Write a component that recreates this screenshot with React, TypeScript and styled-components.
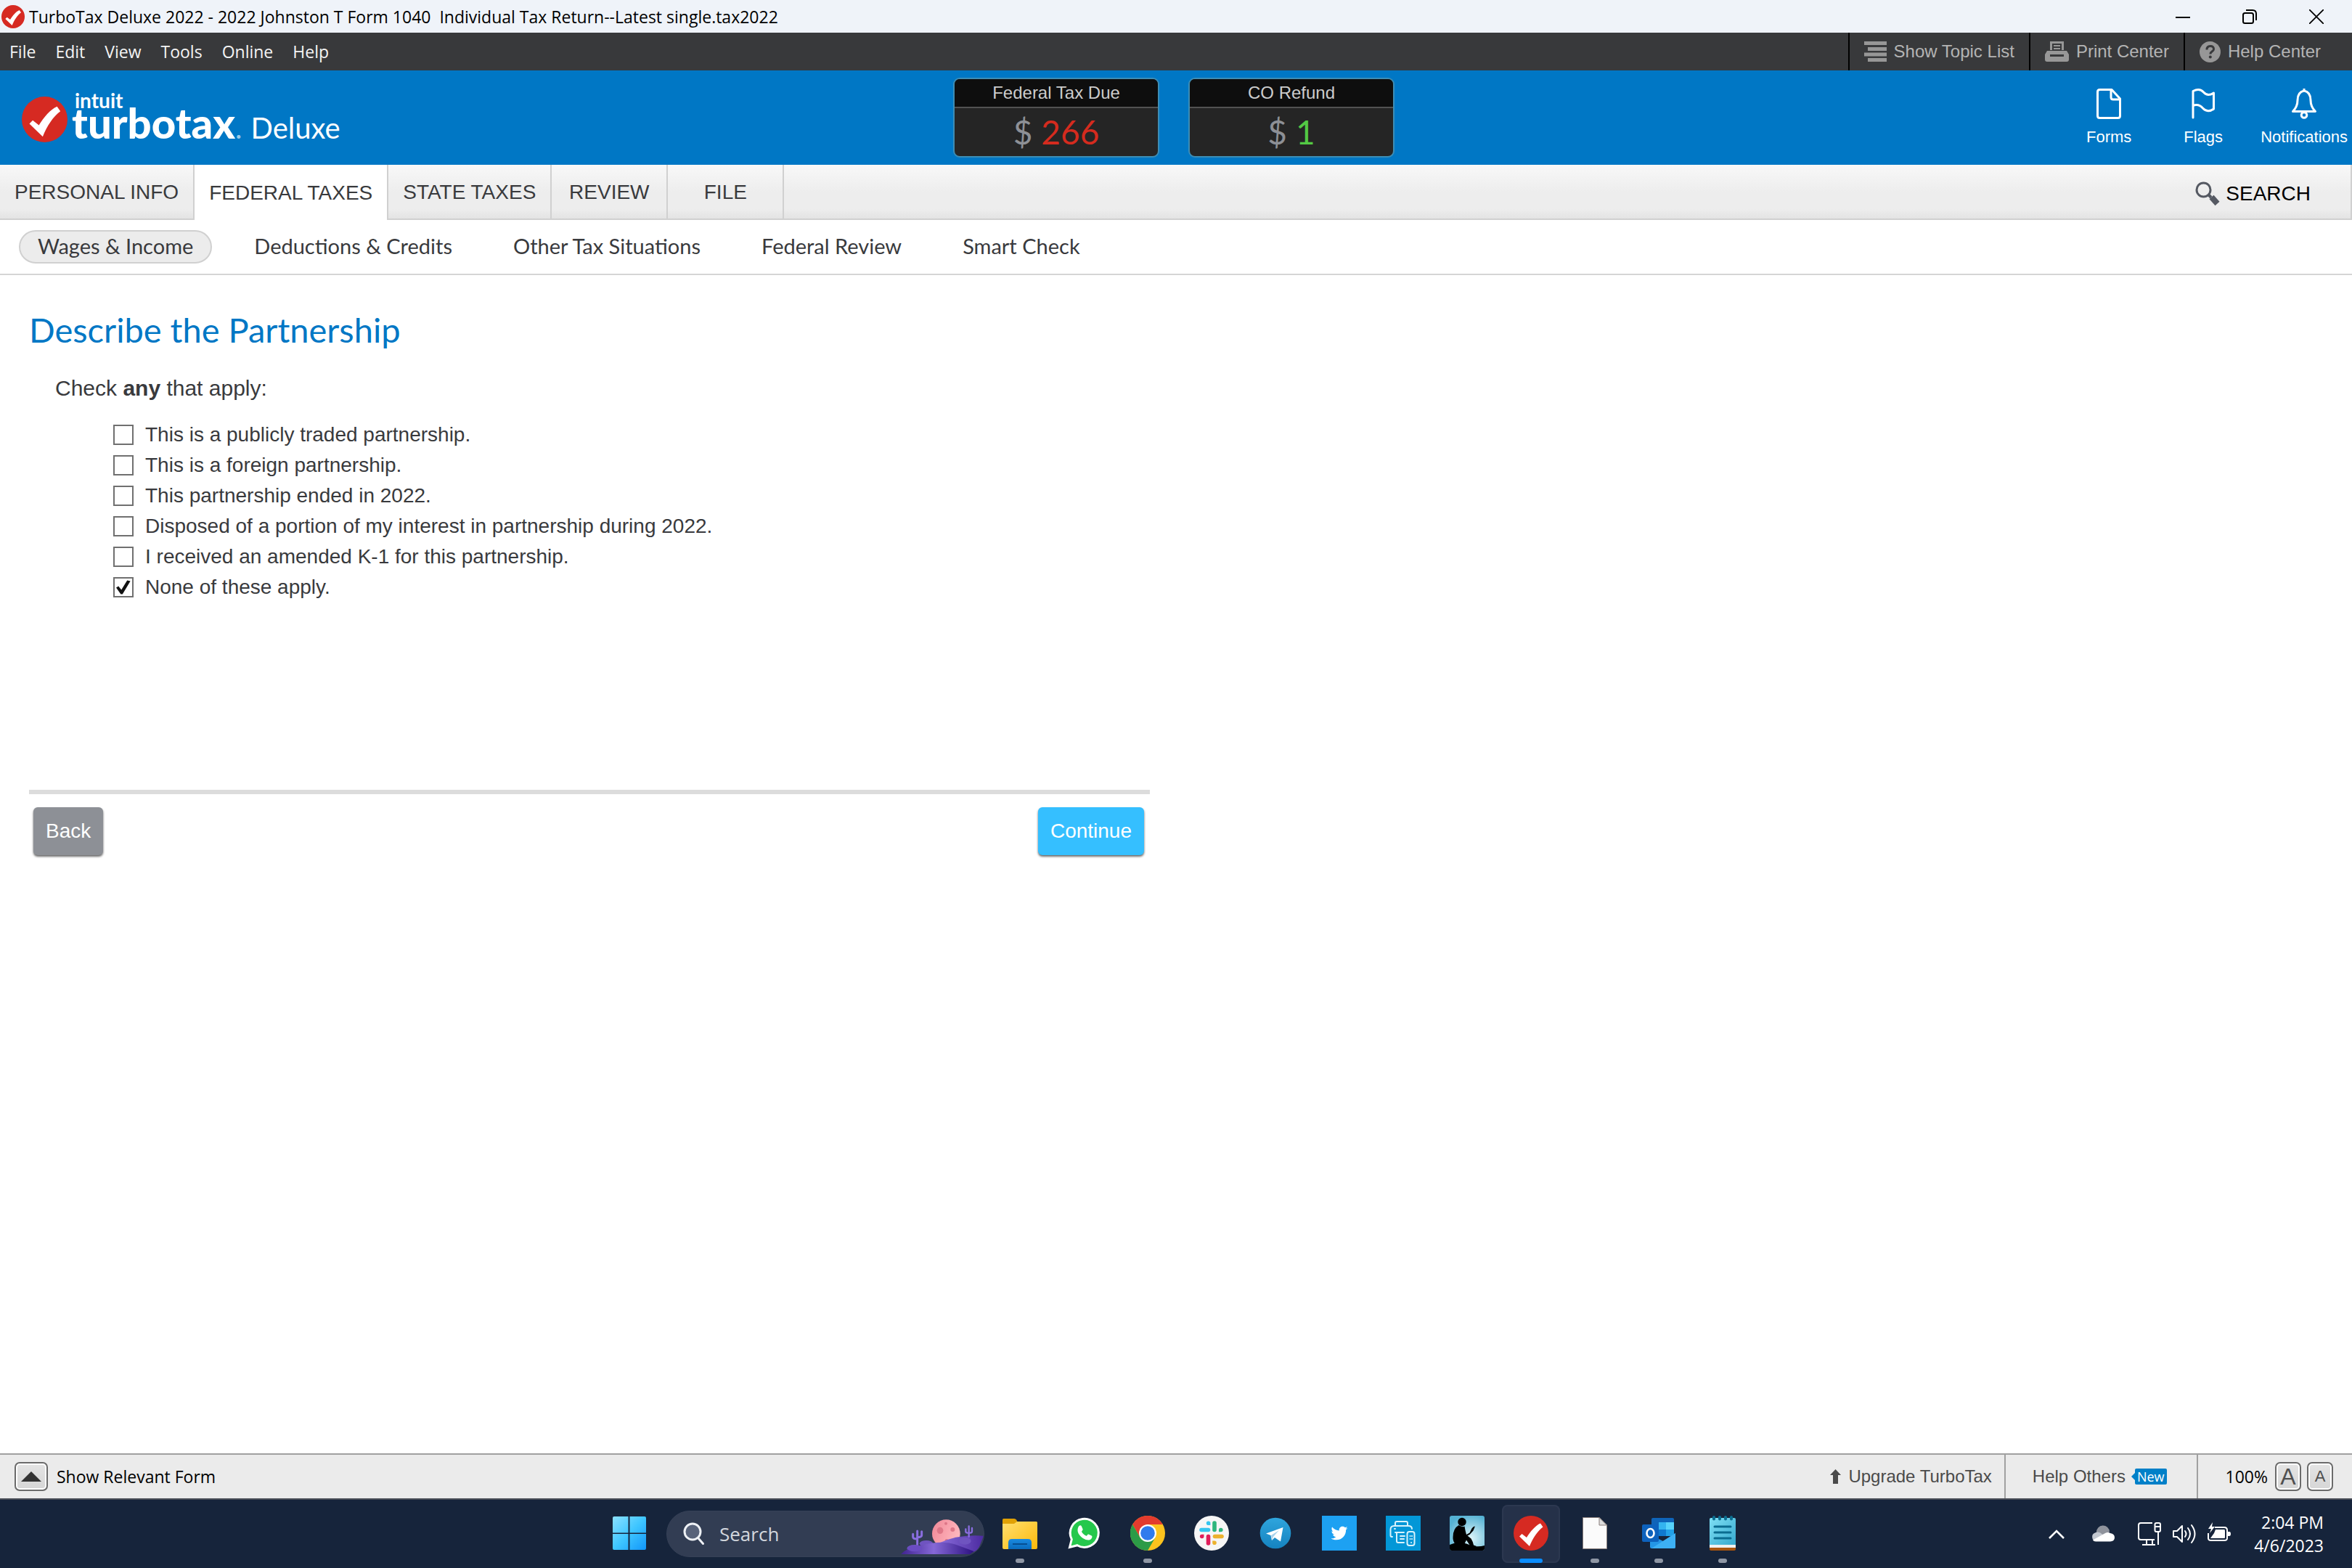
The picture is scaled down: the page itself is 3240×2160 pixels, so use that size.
import React, { useState } from "react";
import styled, { createGlobalStyle } from "styled-components";
import { FaTwitter } from "react-icons/fa";

const sans = '"Liberation Sans", Arial, sans-serif';
const system = '"Open Sans", "Segoe UI", sans-serif';
const brand = 'Lato, "Avenir Next", sans-serif';

const GlobalStyle = createGlobalStyle`
  *, *::before, *::after { box-sizing: border-box; }
  body { margin: 0; background: #fff; font-family: ${sans}; color: #393a3d; }
  button { font: inherit; color: inherit; background: none; border: 0; padding: 0; margin: 0; cursor: pointer; }
  svg { display: block; flex: none; }
`;

const Page = styled.div`
  display: flex;
  flex-direction: column;
  min-height: 100vh;
`;

/* ---------- window chrome ---------- */

const TitleBar = styled.header`
  display: flex;
  align-items: center;
  height: 45px;
  padding: 0 3px 0 2px;
  background: #eff3f9;
  color: #000;
  font: 23px/30px ${system};
`;

const WindowTitle = styled.span`
  flex: 1;
  margin-left: 6px;
  white-space: pre;
`;

const WindowButton = styled.button`
  display: flex;
  justify-content: center;
  align-items: center;
  width: 92px;
  height: 42px;
`;

const MenuBar = styled.nav`
  display: flex;
  align-items: stretch;
  height: 52px;
  background: #38393b;
  color: #f4f4f4;
`;

const MenuList = styled.div`
  display: flex;
  flex: 1;
  align-items: center;
  gap: 27px;
  padding-left: 13px;
  font: 23px/30px ${system};
`;

const ToolButton = styled.button<{ $last?: boolean }>`
  display: flex;
  align-items: center;
  gap: 10px;
  padding: 0 ${(p) => (p.$last ? 43 : 20)}px 0 20px;
  border-left: 2px solid #000;
  color: #b4b4b4;
  font: 24px/30px ${sans};
`;

/* ---------- product header ---------- */

const ProductHeader = styled.div`
  display: grid;
  grid-template-columns: 1fr auto 1fr;
  align-items: center;
  height: 130px;
  padding-right: 6px;
  background: #0077c5;
  color: #fff;
`;

const Logo = styled.div`
  display: flex;
  align-items: flex-end;
  gap: 6px;
  padding-left: 30px;
  font-family: ${brand};
`;

const Words = styled.div`
  padding-bottom: 6px;
`;

const Company = styled.div`
  padding-left: 4px;
  font-size: 28px;
  font-weight: 700;
  line-height: 20px;
`;

const ProductLine = styled.div`
  display: flex;
  align-items: baseline;
  height: 42px;
  line-height: 42px;
`;

const Product = styled.span`
  font-size: 58px;
  font-weight: 900;
`;

const Mark = styled.span`
  font-size: 40px;
  opacity: 0.6;
`;

const Edition = styled.span`
  margin-left: 12px;
  font-size: 40px;
`;

const Totals = styled.div`
  display: flex;
  gap: 40px;
`;

const TotalCard = styled.section`
  width: 284px;
  border: 2px solid #3d8db5;
  border-radius: 9px;
  background: #252525;
  overflow: hidden;
  text-align: center;
`;

const TotalLabel = styled.h2`
  margin: 0;
  background: #0e0e0e;
  border-bottom: 2px solid #525252;
  color: #ccc;
  font: 24px/38px ${sans};
`;

const TotalValue = styled.p<{ $color: string }>`
  display: flex;
  justify-content: center;
  gap: 12px;
  margin: 0;
  color: ${(p) => p.$color};
  font: 46px/66px ${brand};
`;

const Currency = styled.span`
  color: #8d9096;
`;

const HeaderActions = styled.div`
  display: flex;
  justify-content: flex-end;
`;

const HeaderAction = styled.button`
  display: flex;
  flex-direction: column;
  align-items: center;
  gap: 12px;
  min-width: 130px;
  font: 22px/26px ${sans};
  &:last-child {
    min-width: 0;
    margin-left: 14px;
  }
`;

/* ---------- navigation ---------- */

const TabBar = styled.nav`
  display: flex;
  height: 76px;
  background: linear-gradient(#f8f8f8, #ededed 50%, #ededed 80%, #e2e2e2);
  box-shadow: inset 0 -2px #d0d0d0;
`;

const Tab = styled.button<{ $active?: boolean }>`
  min-width: 160px;
  padding: ${(p) => (p.$active ? 2 : 0)}px 20px 0;
  border-right: 2px solid #d0d0d0;
  background: ${(p) => (p.$active ? "#fff" : "none")};
  font: 28px/32px ${sans};
`;

const SearchTab = styled.button`
  display: flex;
  align-items: center;
  gap: 8px;
  margin-left: auto;
  padding: 4px 55px 0 20px;
  border-right: 2px solid #d0d0d0;
  color: #000;
  font: 28px/32px ${sans};
`;

const SubNav = styled.nav`
  display: flex;
  align-items: center;
  gap: 32px;
  height: 76px;
  padding: 0 26px;
  border-bottom: 2px solid #d5d5d5;
`;

const SubLink = styled.a<{ $active?: boolean }>`
  padding: 0 24px 2px;
  border: 2px solid ${(p) => (p.$active ? "#d0d0d0" : "transparent")};
  border-radius: 23px;
  background: ${(p) => (p.$active ? "#ececec" : "none")};
  color: #393a3d;
  font: 29px/40px ${brand};
  text-decoration: none;
`;

/* ---------- interview ---------- */

const Interview = styled.main`
  flex: 1;
  padding: 46px 40px;
`;

const Question = styled.form`
  max-width: 1544px;
`;

const Heading = styled.h1`
  margin: 0 0 35px;
  color: #0077c5;
  font: 47px/58px ${brand};
`;

const Choices = styled.fieldset`
  margin: 0;
  padding: 0 0 258px 36px;
  border: 0;
`;

const Prompt = styled.legend`
  padding: 0;
  margin-bottom: 26px;
  font-size: 30px;
  line-height: 34px;
`;

const Choice = styled.label`
  display: flex;
  align-items: center;
  gap: 16px;
  width: fit-content;
  margin-left: 80px;
  font-size: 28px;
  line-height: 42px;
`;

const Check = styled.input`
  appearance: none;
  display: grid;
  place-items: center;
  width: 28px;
  height: 28px;
  margin: 0;
  border: 2px solid #707070;
  background: #fff;
  &:checked::before {
    content: "";
    width: 20px;
    height: 20px;
    background: #111;
    clip-path: polygon(0 52%, 16% 42%, 36% 68%, 76% 2%, 98% 8%, 44% 98%, 32% 98%);
  }
`;

const Actions = styled.div`
  display: flex;
  justify-content: space-between;
  padding: 18px 8px 0 6px;
  border-top: 6px solid #dcdcdc;
`;

const ActionButton = styled.button<{ $primary?: boolean }>`
  height: 66px;
  padding: 0 17px;
  border-radius: 6px;
  background: ${(p) => (p.$primary ? "#35bfff" : "#8d9096")};
  box-shadow: 0 2px 3px rgba(0, 0, 0, 0.6);
  color: #fff;
  font: 28px/32px ${sans};
`;

/* ---------- status bar ---------- */

const StatusBar = styled.footer`
  display: flex;
  height: 64px;
  border-top: 2px solid #a0a0a0;
  border-bottom: 2px solid #4a4e57;
  background: #ebebeb;
`;

const StatusLeft = styled.div`
  display: flex;
  flex: 1;
  align-items: center;
  gap: 12px;
  padding-left: 20px;
  color: #000;
  font: 23px/30px ${system};
`;

const StatusCell = styled.div<{ $left: number; $right: number; $divided?: boolean }>`
  display: flex;
  align-items: center;
  gap: 10px;
  padding: 0 ${(p) => p.$right}px 0 ${(p) => p.$left}px;
  border-left: ${(p) => (p.$divided ? "2px solid #a0a0a0" : "0")};
  color: #4a4a4a;
  font: 24px/30px ${sans};
`;

const StatusLink = styled.button`
  display: flex;
  align-items: center;
  gap: 10px;
`;

const ZoomLevel = styled.span`
  color: #000;
  font: 23px/30px ${system};
`;

const ZoomButtons = styled.div`
  display: flex;
  gap: 8px;
`;

const BoxButton = styled.button<{ $wide?: boolean; $size?: number }>`
  display: flex;
  justify-content: center;
  align-items: center;
  width: ${(p) => (p.$wide ? 46 : 36)}px;
  height: 40px;
  border: 2px solid #6b6b6b;
  border-radius: 7px;
  background: linear-gradient(#e4e4e4, #d6d6d6);
  box-shadow: inset 0 0 0 2px #fff;
  color: #4f4f4f;
  font: ${(p) => p.$size ?? 22}px/36px ${sans};
`;

const NewBadge = styled.span`
  display: flex;
  align-items: center;
  margin-left: -2px;
  color: #fff;
  font: 18px/22px ${system};
  &::before {
    content: "";
    border: 5px solid transparent;
    border-left: 0;
    border-right-color: #0080c8;
  }
`;

const BadgeText = styled.span`
  padding: 0 3px;
  border-radius: 2px;
  background: #0080c8;
`;

/* ---------- taskbar ---------- */

const Taskbar = styled.nav`
  display: grid;
  grid-template-columns: 1fr auto 1fr;
  align-items: center;
  height: 94px;
  background: #16243b;
  color: #fff;
`;

const Apps = styled.div`
  grid-column: 2;
  display: flex;
  align-items: center;
  gap: 8px;
`;

const AppButton = styled.button<{ $active?: boolean }>`
  display: grid;
  grid-template-rows: 1fr 6px;
  justify-items: center;
  align-items: center;
  row-gap: 4px;
  width: 80px;
  height: 80px;
  padding: 8px 0 0;
  border-radius: 8px;
  background: ${(p) => (p.$active ? "#253149" : "none")};
  box-shadow: ${(p) => (p.$active ? "inset 0 0 0 2px #2c3850" : "none")};
`;

const Running = styled.span<{ $active?: boolean }>`
  width: ${(p) => (p.$active ? 32 : 12)}px;
  height: 6px;
  border-radius: 3px;
  background: ${(p) => (p.$active ? "#0a8dff" : "#8f97a5")};
`;

const TaskSearch = styled.label`
  display: flex;
  align-items: center;
  width: 438px;
  height: 64px;
  margin: 0 1px 0 3px;
  padding-left: 22px;
  border: 1px solid #364157;
  border-radius: 32px;
  background: #323d53;
  overflow: hidden;
`;

const TaskInput = styled.input`
  flex: 1;
  min-width: 0;
  padding: 0 0 0 20px;
  border: 0;
  outline: 0;
  background: none;
  color: #fff;
  font: 26px/36px ${system};
  &::placeholder { color: #d3d7de; opacity: 1; }
`;

const Tray = styled.div`
  display: flex;
  justify-content: flex-end;
  align-items: center;
  gap: 32px;
  padding-right: 39px;
`;

const TrayButton = styled.button`
  display: flex;
  gap: 16px;
`;

const Clock = styled.time`
  text-align: right;
  font: 23px/32px ${system};
`;

/* ---------- drawings ---------- */

const CheckDisc = ({ size }: { size: number }) => (
  <svg width={size} height={size} viewBox="0 0 48 48" aria-hidden="true">
    <circle cx="24" cy="24" r="24" fill="#d62a22" />
    <path d="M8 28.500l3.500-3.500 6.500 5C23 22 30 13.500 37 10.500l3.500 5C33 21 26.500 31 22 42z" fill="#fff" />
  </svg>
);

const FolderIcon = () => (
  <svg width="48" height="48" viewBox="0 0 48 48">
    <defs>
      <linearGradient id="folder" x1="0" y1="0" x2="1" y2="1">
        <stop offset="0" stopColor="#ffdf70" /><stop offset="1" stopColor="#fcb90a" />
      </linearGradient>
      <linearGradient id="pocket" x1="0" y1="0" x2="0" y2="1">
        <stop offset="0" stopColor="#1a8ae0" /><stop offset="1" stopColor="#0a6cbe" />
      </linearGradient>
    </defs>
    <path d="M0 5.500Q0 4 1.500 4H16q2 0 3 1.500L21 9 16 14H0z" fill="#e0a106" />
    <path d="M0 11h16l4-3h26.500Q48 8 48 9.500V44q0 2-2 2H2q-2 0-2-2z" fill="url(#folder)" />
    <path d="M8 46V37q0-5 5-5h22q5 0 5 5v9z" fill="url(#pocket)" />
    <path d="M14 39h20" stroke="#064f91" strokeWidth="2" />
  </svg>
);

const WhatsAppIcon = () => (
  <svg width="48" height="48" viewBox="0 0 48 48">
    <path d="M4.500 43.500l2.800-11A19.500 19.500 0 1 1 15 40.700z" fill="#25c84c" stroke="#fff" strokeWidth="3" />
    <path
      d="M17.500 14c1-1.200 2.800-1 3.300.2l1.900 4.500c.2.800-1.900 2.700-1.700 3.300 1.200 2.500 3.500 4.600 6.500 5.700.8.200 2-2.500 2.900-2.200l4.300 2c1.500.8.500 3.600-.8 4.700-2.600 2.200-6.500 1.600-11.200-1.200-3.500-2.200-6.200-5.600-7-8.900-.6-3 .200-6.300 1.800-8.100z"
      fill="#fff"
    />
  </svg>
);

const ChromeIcon = () => (
  <svg width="48" height="48" viewBox="0 0 48 48">
    <circle cx="24" cy="24" r="24" fill="#fcc31e" />
    <path d="M24 12H44.800A24 24 0 0 0 3.200 12L13.600 30z" fill="#e33b2e" />
    <path d="M13.600 30L3.200 12A24 24 0 0 0 24 48L34.400 30z" fill="#2c9b47" />
    <circle cx="24" cy="24" r="12" fill="#fff" />
    <circle cx="24" cy="24" r="9.800" fill="#2f7bed" />
  </svg>
);

const SlackIcon = () => (
  <svg width="48" height="48" viewBox="0 0 48 48" strokeLinecap="round" strokeWidth="5.600">
    <circle cx="24" cy="24" r="24" fill="#f6f6f6" />
    <path d="M10 19.500h9.500" stroke="#36c5f0" /><path d="M16.800 10.200a2.800 2.800 0 1 1 5.600 0v2.800h-2.800a2.800 2.800 0 0 1-2.800-2.800z" fill="#36c5f0" />
    <path d="M28 10v9.500" stroke="#2eb67d" /><path d="M34 22.300v-2.800a2.800 2.800 0 1 1 2.800 2.800z" fill="#2eb67d" />
    <path d="M28.500 28.500h9.500" stroke="#ecb22e" /><path d="M25.200 34.500h2.800a2.800 2.800 0 1 1-2.800 2.800z" fill="#ecb22e" />
    <path d="M19.500 28.500V38" stroke="#e01e5a" /><path d="M13.500 25.700v2.800a2.800 2.800 0 1 1-2.800-2.800z" fill="#e01e5a" />
  </svg>
);

const TelegramIcon = () => (
  <svg width="48" height="48" viewBox="0 0 48 48">
    <defs>
      <linearGradient id="telegram" x1="0" y1="0" x2="0" y2="1">
        <stop offset="0" stopColor="#2fa5dd" /><stop offset="1" stopColor="#1583c0" />
      </linearGradient>
    </defs>
    <circle cx="24" cy="24" r="21.300" fill="url(#telegram)" />
    <path d="M11 24.500L34.500 16l-3.500 19.500-8-5.500-4 4-1.500-7z" fill="#fff" />
    <path d="M18 27l11-7-8 9-2 4.500z" fill="#a9d3ec" />
  </svg>
);

const TwitterIcon = () => (
  <svg width="48" height="48" viewBox="0 0 48 48">
    <path d="M0 0h48v48H0z" fill="#1da1f2" />
    <FaTwitter x="12.500" y="12.500" size={23} color="#fff" />
  </svg>
);

const PrinterAppIcon = () => (
  <svg width="48" height="48" viewBox="0 0 48 48" fill="none" stroke="#d9f2fb" strokeWidth="2" strokeLinecap="round">
    <path d="M0 0h48v48H0z" fill="#0397d7" stroke="none" />
    <path d="M13 13V10q0-2 2-2h13q2 0 2 2v3M9 29H8q-1.500 0-1.500-2V19q0-5 5-5H31q5 0 5 4M13 23h12M15 23v12q0 2 2 2h8M20 28h6M20 32h5M12 18h1" />
    <rect x="29.500" y="22" width="10" height="19" rx="3" />
    <path d="M33.500 28h.1M36 28h.1M33.500 32h.1M36 32h.1M35 37h.1" />
  </svg>
);

const ReaderIcon = () => (
  <svg width="48" height="48" viewBox="0 0 48 48">
    <defs>
      <radialGradient id="sky" cx="0.600" cy="0.650" r="0.700">
        <stop offset="0" stopColor="#dff6fa" /><stop offset="1" stopColor="#54b1d3" />
      </radialGradient>
    </defs>
    <rect width="48" height="48" rx="3" fill="url(#sky)" />
    <path d="M0 40q11-5 23-1.500 13 6 25 2.500v4q0 3-3 3H3q-3 0-3-3z" />
    <circle cx="17" cy="8.500" r="5.700" />
    <path d="M12.500 13q5 3 8 1.500l1 5.500 1.500 6 4.500-2.500 3-6q2-3 4.500-3l-2.500 6-5 5.500-3 1.500 5 4q2.500 4 3.500 9l4 1.500-5 1-4-2-5-7.500-3 6H8q-4-5-3.500-10 0-12 8-16.500z" />
  </svg>
);

const DocumentIcon = () => (
  <svg width="48" height="48" viewBox="0 0 48 48" stroke="#8a7f7c" strokeWidth="1">
    <path d="M7.500 2.500H30L40.500 13v32.500h-33z" fill="#fbfbfb" />
    <path d="M30 2.500V13h10.500z" fill="#ddd" />
  </svg>
);

const OutlookIcon = () => (
  <svg width="48" height="48" viewBox="0 0 48 48">
    <path d="M14 5q0-2 2-2h27q2 0 2 2v22H14z" fill="#0f64b8" />
    <path d="M24 9h10v10H24z" fill="#33b4f0" />
    <path d="M34 9h11v10H34z" fill="#57d3fb" />
    <path d="M24 19h10v9H24z" fill="#1079cf" />
    <path d="M34 19h11v9H34z" fill="#22a1e8" />
    <path d="M12 26l18 9 17-11v19q0 2-2 2H14q-2 0-2-2z" fill="#2496e6" />
    <path d="M47 24v19q0 2-2 2H14z" fill="#3db0f4" />
    <rect x="1" y="12" width="23" height="24" rx="2" fill="#0d62bd" />
    <ellipse cx="12.500" cy="24" rx="5" ry="6" fill="none" stroke="#fff" strokeWidth="2.600" />
  </svg>
);

const NotepadIcon = () => (
  <svg width="48" height="48" viewBox="0 0 48 48">
    <defs>
      <linearGradient id="notepad" x1="0" y1="0" x2="1" y2="1">
        <stop offset="0" stopColor="#7fe0f4" /><stop offset="1" stopColor="#36a9cf" />
      </linearGradient>
    </defs>
    <path d="M6 43h36v3q0 2-2 2H8q-2 0-2-2z" fill="#a8550f" />
    <path d="M6 39h36v5H6z" fill="#f1f1f1" />
    <path d="M6 5q0-2 2-2h32q2 0 2 2v35H6z" fill="url(#notepad)" />
    <path d="M12 2v2.500M20 2v2.500M28 2v2.500M36 2v2.500" stroke="#0b6d8f" strokeWidth="4" strokeLinecap="round" />
    <path d="M13 15h22M13 23h22M13 31h22" stroke="#0a6c90" strokeWidth="3" strokeLinecap="round" />
  </svg>
);

const StartIcon = () => (
  <svg width="48" height="48" viewBox="0 0 48 48">
    <defs>
      <linearGradient id="start" gradientUnits="userSpaceOnUse" x1="0" y1="0" x2="48" y2="48">
        <stop offset="0" stopColor="#8fe2ff" /><stop offset="0.500" stopColor="#3fc6ff" /><stop offset="1" stopColor="#0f94fa" />
      </linearGradient>
    </defs>
    <path d="M1 3q0-2 2-2h19.500v22.500H1zM24.500 1H45q2 0 2 2v20.500H24.500zM1 25h21.500v22H3q-2 0-2-2zM24.500 25H47v20q0 2-2 2H24.500z" fill="url(#start)" />
  </svg>
);

const SearchScene = () => (
  <svg width="115" height="62" viewBox="0 -9 345 186">
    <defs>
      <linearGradient id="moon" x1="0" y1="0" x2="1" y2="0.400">
        <stop offset="0" stopColor="#f08797" /><stop offset="1" stopColor="#ffb6bd" />
      </linearGradient>
      <linearGradient id="front" x1="0" y1="0" x2="1" y2="0">
        <stop offset="0" stopColor="#3f2390" /><stop offset="0.450" stopColor="#8568d6" /><stop offset="1" stopColor="#2c1180" />
      </linearGradient>
      <linearGradient id="back" x1="0" y1="0" x2="1" y2="0">
        <stop offset="0" stopColor="#8a6ddb" /><stop offset="1" stopColor="#4b2aa0" />
      </linearGradient>
    </defs>
    <circle cx="190" cy="83" r="58" fill="url(#moon)" />
    <g fill="#de7788">
      <ellipse cx="165" cy="70" rx="13" ry="14" /><circle cx="217" cy="66" r="9" /><circle cx="189" cy="41" r="6" /><circle cx="192" cy="112" r="7" />
    </g>
    <path d="M160 122Q240 84 345 92L322 150 300 160z" fill="url(#back)" />
    <g fill="none" stroke="#8a6ee0" strokeWidth="9" strokeLinecap="round">
      <path d="M71 72v58M53 85v12q0 8 18 8M89 74v16q0 8-18 8" />
      <path d="M284 52v44M271 64v10q0 6 13 6M297 60v14q0 6-13 6" strokeWidth="7" />
    </g>
    <g fill="#6f54c0">
      <ellipse cx="108" cy="124" rx="28" ry="13" /><ellipse cx="60" cy="144" rx="32" ry="15" /><ellipse cx="268" cy="113" rx="25" ry="15" />
    </g>
    <path d="M3 168Q30 140 80 132 170 108 230 128L305 156 288 168z" fill="url(#front)" />
    <ellipse cx="60" cy="144" rx="30" ry="13" fill="#6a4cc2" />
  </svg>
);

/* ---------- data ---------- */

const menus = ["File", "Edit", "View", "Tools", "Online", "Help"];
const tabs = ["PERSONAL INFO", "FEDERAL TAXES", "STATE TAXES", "REVIEW", "FILE"];
const sections = ["Wages & Income", "Deductions & Credits", "Other Tax Situations", "Federal Review", "Smart Check"];
const options = [
  "This is a publicly traded partnership.",
  "This is a foreign partnership.",
  "This partnership ended in 2022.",
  "Disposed of a portion of my interest in partnership during 2022.",
  "I received an amended K-1 for this partnership.",
  "None of these apply.",
];
const apps: { name: string; icon: React.ReactNode; running?: boolean; active?: boolean }[] = [
  { name: "File Explorer", icon: <FolderIcon />, running: true },
  { name: "WhatsApp", icon: <WhatsAppIcon /> },
  { name: "Chrome", icon: <ChromeIcon />, running: true },
  { name: "Slack", icon: <SlackIcon /> },
  { name: "Telegram", icon: <TelegramIcon /> },
  { name: "Twitter", icon: <TwitterIcon /> },
  { name: "Printer", icon: <PrinterAppIcon /> },
  { name: "Kindle", icon: <ReaderIcon /> },
  { name: "TurboTax", icon: <CheckDisc size={48} />, running: true, active: true },
  { name: "Document", icon: <DocumentIcon />, running: true },
  { name: "Outlook", icon: <OutlookIcon />, running: true },
  { name: "Notepad", icon: <NotepadIcon />, running: true },
];

export default function App() {
  const [checked, setChecked] = useState(options.map((_, i) => i === options.length - 1));
  const toggle = (index: number) => setChecked(checked.map((on, i) => (i === index ? !on : on)));

  return (
    <Page>
      <GlobalStyle />
      <TitleBar>
        <CheckDisc size={32} />
        <WindowTitle>{"TurboTax Deluxe 2022 - 2022 Johnston T Form 1040  Individual Tax Return--Latest single.tax2022"}</WindowTitle>
        <WindowButton aria-label="Minimize">
          <svg width="20" height="20" viewBox="0 0 20 20"><path d="M0 10h20v2H0z" /></svg>
        </WindowButton>
        <WindowButton aria-label="Restore">
          <svg width="20" height="20" viewBox="0 0 20 20" fill="none" stroke="#000" strokeWidth="2">
            <rect x="1" y="5" width="14" height="14" rx="2.500" />
            <path d="M5 1h9q5 0 5 5v9" />
          </svg>
        </WindowButton>
        <WindowButton aria-label="Close">
          <svg width="20" height="20" viewBox="0 0 20 20" stroke="#000" strokeWidth="1.800"><path d="M0 0l20 20M20 0L0 20" /></svg>
        </WindowButton>
      </TitleBar>

      <MenuBar>
        <MenuList>
          {menus.map((menu) => <button key={menu}>{menu}</button>)}
        </MenuList>
        <ToolButton>
          <svg width="31" height="28" viewBox="0 0 31 28" fill="#979797">
            <path d="M0 0h31v5H0zM5 8h26v5H5zM0 15.500h31v5H0zM5 23h26v5H5z" />
          </svg>
          Show Topic List
        </ToolButton>
        <ToolButton>
          <svg width="33" height="28" viewBox="0 0 33 28" fill="#979797">
            <path d="M7 12V0h19v12h-3V3H10v9z" />
            <path d="M12 5h9v2h-9zM12 9h9v2h-9z" />
            <path fillRule="evenodd" d="M3 13h27l3 5v7q0 3-3 3H3q-3 0-3-3v-7zM7 18v3h19v-3z" />
          </svg>
          Print Center
        </ToolButton>
        <ToolButton $last>
          <svg width="29" height="29" viewBox="0 0 29 29">
            <circle cx="14.500" cy="14.500" r="14.500" fill="#979797" />
            <path d="M10 11.500q0-5 4.800-5t4.700 4.200c0 3.300-4.600 3-4.600 6.800" fill="none" stroke="#38393b" strokeWidth="3" />
            <circle cx="14.800" cy="21.500" r="2" fill="#38393b" />
          </svg>
          Help Center
        </ToolButton>
      </MenuBar>

      <ProductHeader>
        <Logo>
          <CheckDisc size={63} />
          <Words>
            <Company>intuit</Company>
            <ProductLine>
              <Product>turbotax</Product>
              <Mark>.</Mark>
              <Edition>Deluxe</Edition>
            </ProductLine>
          </Words>
        </Logo>
        <Totals>
          <TotalCard>
            <TotalLabel>Federal Tax Due</TotalLabel>
            <TotalValue $color="#d52b1e"><Currency>$</Currency>266</TotalValue>
          </TotalCard>
          <TotalCard>
            <TotalLabel>CO Refund</TotalLabel>
            <TotalValue $color="#53c944"><Currency>$</Currency>1</TotalValue>
          </TotalCard>
        </Totals>
        <HeaderActions>
          <HeaderAction>
            <svg width="34" height="42" viewBox="0 0 34 42" fill="none" stroke="#fff" strokeWidth="3" strokeLinejoin="round">
              <path d="M4 1.500h17L32.500 14v23.500q0 3-3 3H4.500q-3 0-3-3v-33q0-3 3-3z" />
              <path d="M20 2v10q0 3 3 3h9" />
            </svg>
            Forms
          </HeaderAction>
          <HeaderAction>
            <svg width="34" height="42" viewBox="0 0 34 42" fill="none" stroke="#fff" strokeWidth="3" strokeLinecap="round" strokeLinejoin="round">
              <path d="M3 40V3.500C9 .5 14 1 17.500 5S26 9.500 31.500 6v22c-5 4-11 3.500-15-1S8 21.500 3 23.500" />
            </svg>
            Flags
          </HeaderAction>
          <HeaderAction>
            <svg width="36" height="42" viewBox="0 0 36 42" fill="none" stroke="#fff" strokeWidth="3" strokeLinejoin="round">
              <path d="M18 3c7 1.500 9 7 9 13 0 7 2 11 6.500 15.500H2.500C7 27 9 23 9 16 9 10 11 4.500 18 3z" />
              <path d="M18 0v3" />
              <circle cx="18" cy="36.500" r="3.800" />
            </svg>
            Notifications
          </HeaderAction>
        </HeaderActions>
      </ProductHeader>

      <TabBar>
        {tabs.map((tab, i) => <Tab key={tab} $active={i === 1}>{tab}</Tab>)}
        <SearchTab>
          <svg width="34" height="34" viewBox="0 0 34 34" fill="none" stroke="#555962">
            <circle cx="11.500" cy="11.500" r="9.500" strokeWidth="3" />
            <path d="M18 18l4 4" strokeWidth="4" />
            <path d="M22.500 21.500l8 9" strokeWidth="8" />
          </svg>
          SEARCH
        </SearchTab>
      </TabBar>

      <SubNav>
        {sections.map((section, i) => <SubLink key={section} href="#" $active={i === 0}>{section}</SubLink>)}
      </SubNav>

      <Interview>
        <Question onSubmit={(event) => event.preventDefault()}>
          <Heading>Describe the Partnership</Heading>
          <Choices>
            <Prompt>Check <b>any</b> that apply:</Prompt>
            {options.map((option, i) => (
              <Choice key={option}>
                <Check type="checkbox" checked={checked[i]} onChange={() => toggle(i)} />
                {option}
              </Choice>
            ))}
          </Choices>
          <Actions>
            <ActionButton type="button">Back</ActionButton>
            <ActionButton type="submit" $primary>Continue</ActionButton>
          </Actions>
        </Question>
      </Interview>

      <StatusBar>
        <StatusLeft>
          <BoxButton $wide aria-label="Show Relevant Form">
            <svg width="28" height="14" viewBox="0 0 28 14"><path d="M14 0l14 14H0z" fill="#333" /></svg>
          </BoxButton>
          Show Relevant Form
        </StatusLeft>
        <StatusCell $left={20} $right={17}>
          <StatusLink>
            <svg width="15" height="20" viewBox="0 0 15 20"><path d="M7.500 0L15 8h-4v12H4V8H0z" fill="#4a4a4a" /></svg>
            Upgrade TurboTax
          </StatusLink>
        </StatusCell>
        <StatusCell $left={37} $right={41} $divided>
          <StatusLink>
            Help Others
            <NewBadge><BadgeText>New</BadgeText></NewBadge>
          </StatusLink>
        </StatusCell>
        <StatusCell $left={38} $right={26} $divided>
          <ZoomLevel>100%</ZoomLevel>
          <ZoomButtons>
            <BoxButton $size={32} aria-label="Larger text">A</BoxButton>
            <BoxButton $size={22} aria-label="Smaller text">A</BoxButton>
          </ZoomButtons>
        </StatusCell>
      </StatusBar>

      <Taskbar>
        <Apps>
          <AppButton aria-label="Start"><StartIcon /></AppButton>
          <TaskSearch>
            <svg width="30" height="32" viewBox="0 0 30 32" fill="none" stroke="#eef1f5" strokeWidth="3" strokeLinecap="round">
              <circle cx="13" cy="13" r="11" fill="#58637a" />
              <path d="M21 22l6.500 7.500" />
            </svg>
            <TaskInput type="text" placeholder="Search" aria-label="Search" />
            <SearchScene />
          </TaskSearch>
          {apps.map((app) => (
            <AppButton key={app.name} aria-label={app.name} $active={app.active}>
              {app.icon}
              {app.running && <Running $active={app.active} />}
            </AppButton>
          ))}
        </Apps>
        <Tray>
          <TrayButton aria-label="Show hidden icons">
            <svg width="32" height="32" viewBox="0 0 32 32" fill="none" stroke="#fff" strokeWidth="2.600"><path d="M6 22l10-10 10 10" /></svg>
          </TrayButton>
          <TrayButton aria-label="OneDrive">
            <svg width="32" height="32" viewBox="0 0 32 32">
              <path d="M7 14a9 9 0 0 1 18-1l-8 7z" fill="#8f939c" />
              <path d="M6 26a6 6 0 0 1-1-11.500q5-3 10 2l6 4z" fill="#c3c8d0" />
              <path d="M6 26.500q-3 0-4-2L19 15q4-2 7 0 6 1 6 6t-6 5.500z" fill="#fff" />
            </svg>
          </TrayButton>
          <TrayButton aria-label="Network, volume and battery">
            <svg width="32" height="32" viewBox="0 0 32 32" fill="none" stroke="#fff" strokeWidth="2">
              <path d="M20 1H4Q1 1 1 4v17q0 3 3 3h19M12 24v6M20 24v6M6 31h18M28 14v17" />
              <rect x="23.500" y="1" width="7.500" height="12" rx="2" />
              <path d="M24 6h7" />
            </svg>
            <svg width="32" height="32" viewBox="0 0 32 32" fill="none" stroke="#fff" strokeWidth="2" strokeLinejoin="round" strokeLinecap="round">
              <path d="M1 12h5l7-7v22l-7-7H1zM17 12q3 4 0 8M21 8q6 8 0 16M26 4q9 12 0 24" />
            </svg>
            <svg width="32" height="32" viewBox="0 0 32 32" fill="none" stroke="#fff" strokeWidth="2">
              <path d="M10 7h13q4 0 4 4v11q0 3-4 3H5q-4 0-4-3v-7" />
              <path d="M11 10h12q1 0 1 2v9q0 1-1 1H4l5-7zM27 13h3q2 0 2 3t-2 3h-3zM7 0L1 9h4l-2 6 7-9H6z" fill="#fff" stroke="none" />
            </svg>
          </TrayButton>
          <Clock>2:04 PM<br />4/6/2023</Clock>
        </Tray>
      </Taskbar>
    </Page>
  );
}
